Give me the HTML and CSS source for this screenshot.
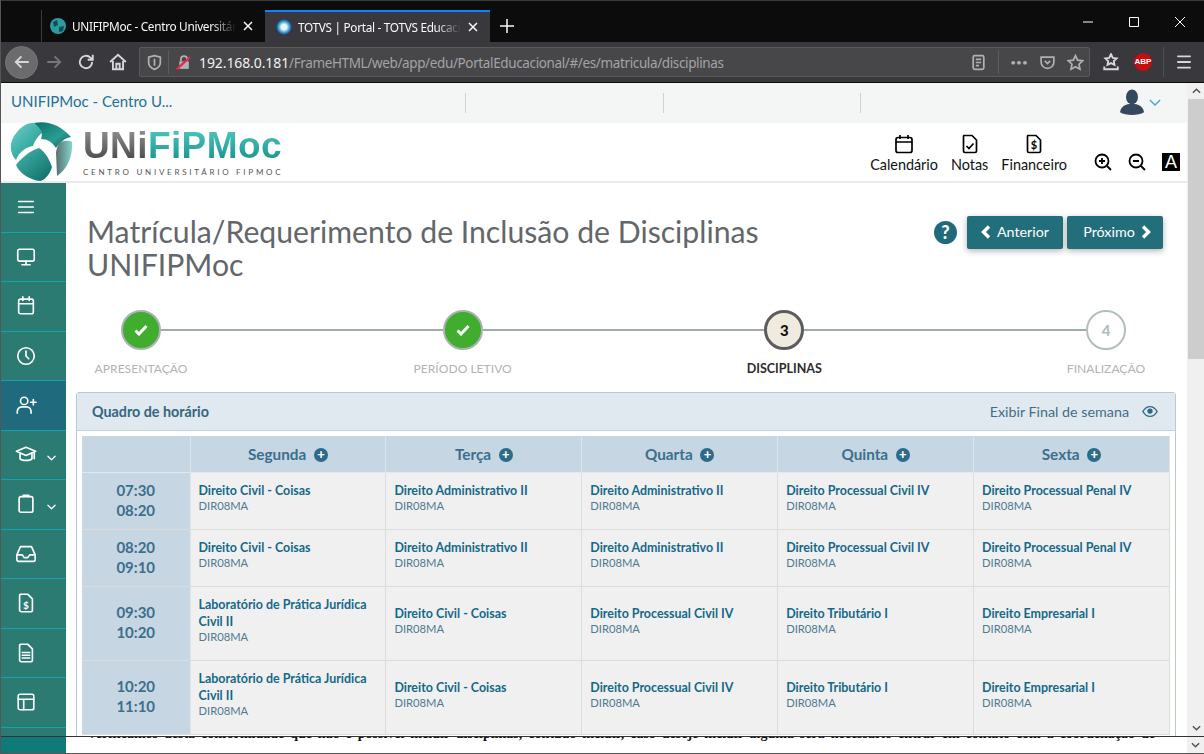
FILE: index.html
```html
<!DOCTYPE html>
<html lang="pt-BR">
<head>
<meta charset="utf-8">
<title>TOTVS | Portal - TOTVS Educacional</title>
<link rel="stylesheet" href="styles.css">
</head>
<body>
<svg class="defs" width="0" height="0">
  <defs>
    <linearGradient id="tealA" x1="0" y1="0" x2="1" y2="1"><stop offset="0" stop-color="#6fd0c8"/><stop offset="1" stop-color="#0f8f86"/></linearGradient>
    <linearGradient id="tealB" x1="0" y1="0" x2="1" y2="1"><stop offset="0" stop-color="#0b6f68"/><stop offset=".6" stop-color="#2a9d94"/><stop offset="1" stop-color="#0f5f5a"/></linearGradient>
    <linearGradient id="tealC" x1="0" y1="0" x2="1" y2="0"><stop offset="0" stop-color="#5b6f6d"/><stop offset="1" stop-color="#7fd6ce"/></linearGradient>
    <linearGradient id="tealD" x1="0" y1="0" x2="1" y2="1"><stop offset="0" stop-color="#45b8ae"/><stop offset="1" stop-color="#0c6a64"/></linearGradient>
    <radialGradient id="totvsFav"><stop offset=".35" stop-color="#e4f4fa"/><stop offset=".6" stop-color="#5fb6dd"/><stop offset="1" stop-color="#0b3f7c"/></radialGradient>
  </defs>
</svg>

<div class="tabbar">
  <div class="tab">
    <svg class="favicon" viewBox="0 0 16 16"><circle cx="8" cy="8" r="8" fill="#2f9aa0"/><path d="M3 4l4-2 1 5-4 2zM9 9l5-1-1 5-4 1z" fill="#0c4f58"/></svg>
    <span class="tab-title">UNIFIPMoc - Centro Universitário FIPMoc</span>
    <svg class="tab-close" viewBox="0 0 12 12"><path d="M2 2l8 8M10 2l-8 8"/></svg>
  </div>
  <div class="tab active">
    <svg class="favicon" viewBox="0 0 16 16"><circle cx="8" cy="8" r="8" fill="url(#totvsFav)"/></svg>
    <span class="tab-title">TOTVS | Portal - TOTVS Educacional</span>
    <svg class="tab-close" viewBox="0 0 12 12"><path d="M2 2l8 8M10 2l-8 8"/></svg>
  </div>
  <svg class="new-tab" viewBox="0 0 14 14"><path d="M7 0v14M0 7h14"/></svg>
  <div class="win-btns">
    <svg viewBox="0 0 12 12"><path d="M1 6h10"/></svg>
    <svg viewBox="0 0 12 12"><path d="M1.500 1.500h9v9h-9z"/></svg>
    <svg viewBox="0 0 12 12"><path d="M1 1l10 10M11 1L1 11"/></svg>
  </div>
</div>

<div class="toolbar">
  <div class="tool-btn back"><svg viewBox="0 0 16 16"><path d="M14 8H2.500M7.500 3l-5 5 5 5"/></svg></div>
  <div class="tool-btn dim"><svg viewBox="0 0 16 16"><path d="M2 8h11.500M8.500 3l5 5-5 5"/></svg></div>
  <div class="tool-btn"><svg viewBox="0 0 16 16"><path d="M13.500 8a5.500 5.500 0 1 1-1.600-3.900L14 6M14 1.500V6H9.500"/></svg></div>
  <div class="tool-btn"><svg viewBox="0 0 16 16"><path d="M1 8l7-6.500L15 8M3.500 7v7.500h9V7M6.500 14.500v-5h3v5"/></svg></div>
  <div class="urlbar">
    <div class="url-icon"><svg viewBox="0 0 16 16"><path d="M8 1.500l5.500 1.500v5c0 3.500-3 5.500-5.500 6.500C5.500 13.500 2.500 11.500 2.500 8V3zM8 4.500v6.500"/></svg></div>
    <div class="url-sep"></div>
    <div class="url-icon lock"><svg viewBox="0 0 16 16"><rect x="4" y="7" width="9" height="7" fill="#b1b1b3" stroke="none"/><path d="M5.500 7V5a3 3 0 0 1 6 0v2" /><path class="slash" d="M1.500 14.500L14 3"/></svg></div>
    <span class="url-text"><b>192.168.0.181</b>/FrameHTML/web/app/edu/PortalEducacional/#/es/matricula/disciplinas</span>
    <div class="url-right">
      <div class="url-icon"><svg viewBox="0 0 16 16"><rect x="3" y="1.500" width="10" height="13" rx="1.500"/><path d="M5.500 5h5M5.500 8h5M5.500 11h3"/></svg></div>
      <div class="url-sep wide"></div>
      <div class="url-icon dots">•••</div>
      <div class="url-icon"><svg viewBox="0 0 16 16"><path d="M2 3h12v4.500a6 6 0 0 1-12 0zM5.500 6.500L8 9l2.500-2.500"/></svg></div>
      <div class="url-icon"><svg viewBox="0 0 16 16"><path d="M8 1.500l2 4.300 4.700.6-3.400 3.200.9 4.700L8 12l-4.200 2.300.9-4.700L1.300 6.400 6 5.800z"/></svg></div>
    </div>
  </div>
  <div class="tool-btn"><svg viewBox="0 0 16 16"><path d="M8 1l1.600 3.300 3.400.5-2.500 2.400.6 3.300L8 9l-3.100 1.500.6-3.300L3 4.800l3.400-.5zM2 12v2.500h12V12"/></svg></div>
  <div class="tool-btn"><span class="abp">ABP</span></div>
  <div class="tool-sep"></div>
  <div class="tool-btn menu"><svg viewBox="0 0 16 16"><path d="M2 3h12M2 8h12M2 13h12"/></svg></div>
</div>

<div class="site">
  <div class="site-main">
    <div class="site-col">
      <div class="topbar">
        <div class="top-title">UNIFIPMoc - Centro U...</div>
        <div class="top-slot"></div>
        <div class="top-slot"></div>
        <div class="top-slot"></div>
        <div class="top-user">
          <svg class="avatar" viewBox="0 0 26 28"><ellipse cx="13" cy="8.500" rx="6.500" ry="8" fill="#34495e"/><path d="M0 25c1-6 6-9 13-9s12 3 13 9c-3 2-8 3-13 3s-10-1-13-3z" fill="#34495e"/></svg>
          <svg class="user-caret" viewBox="0 0 14 8"><path d="M1 1l6 6 6-6"/></svg>
        </div>
      </div>

      <div class="header">
        <div class="logo">
          <svg class="globe" viewBox="0 0 62 60">
            <path d="M17 2c8-3 15 1 19 6-5 3-11 9-13 16-7 1-14 6-17 14C0 32-1 22 4 14 8 8 12 4 17 2z" fill="url(#tealA)"/>
            <path d="M24 1c13-3 27 2 37 14-6 1-11 5-15 11-4-6-9-9-15-9 2-5 1-10-7-16z" fill="url(#tealB)"/>
            <path d="M29 26c5 3 10 10 13 19-2 7-7 13-12 14C20 58 10 52 6 43c6-8 14-14 23-17z" fill="url(#tealD)"/>
            <path d="M50 20c5-1 9-2 12 0 1 13-4 27-15 34l-1-24c1-4 2-8 4-10z" fill="url(#tealC)"/>
          </svg>
          <div class="logo-text">
            <div class="logo-name"><span class="logo-uni">UNi</span><span class="logo-fip">FiPMoc</span></div>
            <div class="logo-sub">CENTRO UNIVERSITÁRIO FIPMOC</div>
          </div>
        </div>
        <div class="shortcuts">
          <div class="shortcut">
            <svg viewBox="0 0 20 20"><rect x="2" y="3.500" width="16" height="15" rx="2"/><path d="M2 8h16M6 1v4M14 1v4"/></svg>
            <span>Calendário</span>
          </div>
          <div class="shortcut">
            <svg viewBox="0 0 20 20"><path d="M4 1.500h8l4.500 4.500v11a1.500 1.500 0 0 1-1.500 1.500H5A1.500 1.500 0 0 1 3.500 17V3A1.500 1.500 0 0 1 4 1.500zM6.500 12l2.500 2.500 4.500-5"/></svg>
            <span>Notas</span>
          </div>
          <div class="shortcut">
            <svg viewBox="0 0 20 20"><path d="M4 1.500h8l4.500 4.500v11a1.500 1.500 0 0 1-1.500 1.500H5A1.500 1.500 0 0 1 3.500 17V3A1.500 1.500 0 0 1 4 1.500z"/><text x="10" y="15" text-anchor="middle" class="dollar">$</text></svg>
            <span>Financeiro</span>
          </div>
        </div>
        <div class="zoom-tools">
          <svg viewBox="0 0 18 18"><circle cx="8" cy="8" r="6.500"/><path d="M13 13l4 4M5 8h6M8 5v6"/></svg>
          <svg viewBox="0 0 18 18"><circle cx="8" cy="8" r="6.500"/><path d="M13 13l4 4M5 8h6"/></svg>
          <span class="contrast">A</span>
        </div>
      </div>

      <div class="body">
        <div class="sidebar">
          <div class="side-item"><svg viewBox="0 0 24 24"><path d="M4 6h16M4 12h16M4 18h16"/></svg></div>
          <div class="side-item"><svg viewBox="0 0 24 24"><rect x="3" y="3.500" width="18" height="13" rx="2"/><path d="M12 16.500v4M7.500 20.500h9"/></svg></div>
          <div class="side-item"><svg viewBox="0 0 24 24"><rect x="4" y="4.500" width="16" height="16" rx="2"/><path d="M4 9.500h16M8.500 2v4M15.500 2v4"/></svg></div>
          <div class="side-item"><svg viewBox="0 0 24 24"><circle cx="12" cy="12" r="9"/><path d="M12 6.500V12l3 3"/></svg></div>
          <div class="side-item current"><svg viewBox="0 0 24 24"><circle cx="10" cy="7.500" r="4"/><path d="M2.500 21v-2a5 5 0 0 1 5-5h5a5 5 0 0 1 5 5v2M20 6v6M17 9h6"/></svg></div>
          <div class="side-item has-sub"><svg viewBox="0 0 24 24"><path d="M1.500 8L12 3.500 22.500 8 12 12.500zM5.500 10v6c2 2.500 11 2.500 13 0v-6M21 9v7"/></svg><svg class="caret" viewBox="0 0 10 6"><path d="M1 1l4 4 4-4"/></svg></div>
          <div class="side-item has-sub"><svg viewBox="0 0 24 24"><rect x="4.500" y="4" width="15" height="17" rx="2"/><path d="M9 4V2.500h6V4"/></svg><svg class="caret" viewBox="0 0 10 6"><path d="M1 1l4 4 4-4"/></svg></div>
          <div class="side-item"><svg viewBox="0 0 24 24"><path d="M6 4h12l4 9v5a2 2 0 0 1-2 2H4a2 2 0 0 1-2-2v-5zM2 13h6l2 3h4l2-3h6"/></svg></div>
          <div class="side-item"><svg viewBox="0 0 24 24"><path d="M6 2.500h8l5 5v12a2 2 0 0 1-2 2H7a2 2 0 0 1-2-2v-15a2 2 0 0 1 1-2z"/><text x="12" y="18" text-anchor="middle" class="side-dollar">$</text></svg></div>
          <div class="side-item"><svg viewBox="0 0 24 24"><path d="M6 2.500h8l5 5v12a2 2 0 0 1-2 2H7a2 2 0 0 1-2-2v-15a2 2 0 0 1 1-2zM8 11.500h8M8 14.500h8M8 17.500h8"/></svg></div>
          <div class="side-item"><svg viewBox="0 0 24 24"><rect x="3.500" y="3.500" width="17" height="17" rx="2"/><path d="M3.500 9h17M9.500 9v11.500"/></svg></div>
        </div>

        <div class="content">
          <div class="title-row">
            <h1>Matrícula/Requerimento de Inclusão de Disciplinas UNIFIPMoc</h1>
            <div class="title-actions">
              <span class="help">?</span>
              <button class="nav-btn"><svg viewBox="0 0 10 14"><path d="M8 1.500L2.500 7 8 12.500"/></svg>Anterior</button>
              <button class="nav-btn">Próximo<svg viewBox="0 0 10 14"><path d="M2 1.500L7.500 7 2 12.500"/></svg></button>
            </div>
          </div>

          <div class="stepper">
            <div class="step-track">
              <span class="step done"><svg viewBox="0 0 14 12"><path d="M1.500 6.500l3.500 3.500 7.500-8"/></svg></span>
              <span class="step-line"></span>
              <span class="step done"><svg viewBox="0 0 14 12"><path d="M1.500 6.500l3.500 3.500 7.500-8"/></svg></span>
              <span class="step-line"></span>
              <span class="step now">3</span>
              <span class="step-line"></span>
              <span class="step todo">4</span>
            </div>
            <div class="step-labels">
              <span>APRESENTAÇÃO</span>
              <span>PERÍODO LETIVO</span>
              <span class="label-now">DISCIPLINAS</span>
              <span>FINALIZAÇÃO</span>
            </div>
          </div>

          <div class="panel">
            <div class="panel-head">
              <span class="panel-title">Quadro de horário</span>
              <span class="panel-link">Exibir Final de semana
                <svg viewBox="0 0 18 14"><path d="M1 7c2-3.500 5-5.500 8-5.500S15 3.500 17 7c-2 3.500-5 5.500-8 5.500S3 10.500 1 7z"/><circle cx="9" cy="6.500" r="3" class="eye-dot"/></svg>
              </span>
            </div>
            <div class="panel-body">
              <table class="grade">
                <tr>
                  <th class="time"></th>
                  <th>Segunda <span class="plus">+</span></th>
                  <th>Terça <span class="plus">+</span></th>
                  <th>Quarta <span class="plus">+</span></th>
                  <th>Quinta <span class="plus">+</span></th>
                  <th>Sexta <span class="plus">+</span></th>
                </tr>
                <tr class="row-a">
                  <td class="time">07:30<br>08:20</td>
                  <td><b>Direito Civil - Coisas</b><small>DIR08MA</small></td>
                  <td><b>Direito Administrativo II</b><small>DIR08MA</small></td>
                  <td><b>Direito Administrativo II</b><small>DIR08MA</small></td>
                  <td><b>Direito Processual Civil IV</b><small>DIR08MA</small></td>
                  <td><b>Direito Processual Penal IV</b><small>DIR08MA</small></td>
                </tr>
                <tr class="row-a">
                  <td class="time">08:20<br>09:10</td>
                  <td><b>Direito Civil - Coisas</b><small>DIR08MA</small></td>
                  <td><b>Direito Administrativo II</b><small>DIR08MA</small></td>
                  <td><b>Direito Administrativo II</b><small>DIR08MA</small></td>
                  <td><b>Direito Processual Civil IV</b><small>DIR08MA</small></td>
                  <td><b>Direito Processual Penal IV</b><small>DIR08MA</small></td>
                </tr>
                <tr class="row-b">
                  <td class="time">09:30<br>10:20</td>
                  <td><b>Laboratório de Prática Jurídica Civil II</b><small>DIR08MA</small></td>
                  <td><b>Direito Civil - Coisas</b><small>DIR08MA</small></td>
                  <td><b>Direito Processual Civil IV</b><small>DIR08MA</small></td>
                  <td><b>Direito Tributário I</b><small>DIR08MA</small></td>
                  <td><b>Direito Empresarial I</b><small>DIR08MA</small></td>
                </tr>
                <tr class="row-b">
                  <td class="time">10:20<br>11:10</td>
                  <td><b>Laboratório de Prática Jurídica Civil II</b><small>DIR08MA</small></td>
                  <td><b>Direito Civil - Coisas</b><small>DIR08MA</small></td>
                  <td><b>Direito Processual Civil IV</b><small>DIR08MA</small></td>
                  <td><b>Direito Tributário I</b><small>DIR08MA</small></td>
                  <td><b>Direito Empresarial I</b><small>DIR08MA</small></td>
                </tr>
              </table>
            </div>
          </div>
        </div>
      </div>
    </div>
    <div class="scrollbar">
      <svg class="arrow" viewBox="0 0 10 6"><path d="M1 5l4-4 4 4"/></svg>
      <div class="thumb"></div>
      <svg class="arrow down" viewBox="0 0 10 6"><path d="M1 1l4 4 4-4"/></svg>
    </div>
  </div>
  <div class="site-bottom">
    <div class="bottom-side"></div>
    <div class="bottom-text"><p>Verificamos desta conformidade que não é possível incluir disciplinas, contudo incluir, caso deseje incluir alguma será necessário entrar em contato com a coordenação de</p></div>
    <div class="bottom-scroll"><svg class="arrow" viewBox="0 0 10 6"><path d="M1 1l4 4 4-4"/></svg></div>
  </div>
</div>
</body>
</html>
```

FILE: styles.css
```css
* {
  padding: 0;
  margin: 0;
  box-sizing: border-box;
}

html, body {
  height: 100%;
  overflow: hidden;
}

body {
  display: flex;
  flex-direction: column;
  font-family: Lato, "Noto Sans", sans-serif;
  background-color: #fff;
  border-left: 1px solid #555;
  border-bottom: 1px solid #555;
}

.defs {
  position: absolute;
}

/* browser chrome */
.tabbar {
  display: flex;
  align-items: flex-end;
  height: 42px;
  flex-shrink: 0;
  background-color: #0c0c0d;
  border-top: 1px solid #3a3a3a;
  padding-left: 40px;
  font-family: "Noto Sans", sans-serif;
}

.tab {
  display: flex;
  align-items: center;
  width: 224px;
  height: 32px;
  padding: 0 11px 0 8px;
  color: #f9f9fa;
  font-size: 11.8px;
  letter-spacing: -0.3px;
  border-left: 1px solid #3a3a3a;
}

.tab.active {
  width: 225px;
  background-color: #38383d;
  border-left: 0;
  border-top: 2px solid #0a84ff;
  padding: 0 11px;
}

.favicon {
  width: 16px;
  height: 16px;
  flex-shrink: 0;
  margin-right: 6px;
}

.tab-title {
  flex-grow: 1;
  overflow: hidden;
  white-space: nowrap;
  -webkit-mask-image: linear-gradient(to right, #000 85%, transparent);
  mask-image: linear-gradient(to right, #000 85%, transparent);
}

.tab-close {
  width: 12px;
  height: 12px;
  flex-shrink: 0;
  margin-left: 6px;
  fill: none;
  stroke: #f9f9fa;
  stroke-width: 1.5;
}

.new-tab {
  width: 14px;
  height: 14px;
  margin: 0 0 9px 10px;
  fill: none;
  stroke: #f9f9fa;
  stroke-width: 1.5;
}

.win-btns {
  display: flex;
  gap: 34px;
  margin-left: auto;
  margin-right: 18px;
  align-self: flex-start;
  margin-top: 15px;
}

.win-btns svg {
  width: 12px;
  height: 12px;
  fill: none;
  stroke: #fff;
  stroke-width: 1;
}

.toolbar {
  display: flex;
  align-items: center;
  height: 41px;
  flex-shrink: 0;
  background-color: #38383d;
  padding-left: 4px;
  border-bottom: 1px solid #0c0c0d;
}

.tool-btn {
  display: flex;
  justify-content: center;
  align-items: center;
  width: 32px;
  height: 33px;
}

.tool-btn svg {
  width: 18px;
  height: 18px;
  fill: none;
  stroke: #d7d7db;
  stroke-width: 1.7;
}

.tool-btn.back {
  width: 33px;
  border-radius: 50%;
  background-color: #6b6b6e;
  border: 1px solid #77777a;
}

.tool-btn.dim svg {
  stroke: #77777b;
}

.urlbar {
  display: flex;
  align-items: center;
  width: 951px;
  height: 30px;
  margin: 0 5px;
  background-color: #474749;
  border: 1px solid #5a5a5d;
  border-radius: 2px;
}

.url-icon {
  display: flex;
  justify-content: center;
  align-items: center;
  width: 28px;
  height: 28px;
  color: #b1b1b3;
  flex-shrink: 0;
}

.url-icon svg {
  width: 17px;
  height: 17px;
  fill: none;
  stroke: #b1b1b3;
  stroke-width: 1.6;
}

.url-icon.lock .slash {
  stroke: #e22850;
  stroke-width: 2;
}

.url-icon.dots {
  font-size: 10px;
}

.url-sep {
  width: 1px;
  height: 24px;
  background-color: #5c5c5f;
  flex-shrink: 0;
}

.url-sep.wide {
  margin: 0 6px;
}

.url-text {
  margin-left: 2px;
  color: #a3a3a6;
  font-size: 13.5px;
  letter-spacing: -0.37px;
  white-space: nowrap;
  font-family: "Noto Sans", sans-serif;
}

.url-text b {
  color: #f0f0f2;
  font-size: 14px;
  letter-spacing: -0.1px;
  font-weight: normal;
}

.url-right {
  display: flex;
  align-items: center;
  margin-left: auto;
}

.abp {
  display: block;
  width: 18px;
  height: 18px;
  line-height: 18px;
  border-radius: 50%;
  background-color: #c70d0d;
  color: #fff;
  font-size: 8px;
  font-weight: bold;
  text-align: center;
  font-family: "Liberation Sans", sans-serif;
}

.tool-sep {
  width: 1px;
  height: 30px;
  margin: 0 4px;
  background-color: #505054;
}

/* page */
.site {
  flex-grow: 1;
  display: flex;
  flex-direction: column;
  min-height: 0;
}

.site-main {
  display: flex;
  height: 653px;
  flex-shrink: 0;
}

.site-col {
  flex-grow: 1;
  display: flex;
  flex-direction: column;
  min-width: 0;
}

.topbar {
  display: flex;
  align-items: center;
  height: 40px;
  flex-shrink: 0;
  background-color: #f4f6f5;
}

.top-title {
  width: 464px;
  padding: 0 0 4px 10px;
  color: #1f7095;
  font-size: 15px;
}

.top-slot {
  width: 197.5px;
  height: 20px;
  border-left: 1px solid #cfd2d1;
}

.top-user {
  display: flex;
  align-items: center;
  margin-left: auto;
  margin-right: 26px;
  padding-bottom: 2px;
}

.avatar {
  width: 24px;
  height: 26px;
}

.user-caret {
  width: 12px;
  height: 7px;
  margin-left: 5px;
  fill: none;
  stroke: #48a9cf;
  stroke-width: 1.6;
}

.header {
  display: flex;
  align-items: center;
  height: 60px;
  flex-shrink: 0;
  background-color: #fff;
  border-bottom: 2px solid #ebebeb;
  padding-right: 7px;
}

.logo {
  display: flex;
  align-items: center;
  margin-right: auto;
  padding-left: 9px;
}

.globe {
  width: 62px;
  height: 60px;
}

.logo-text {
  margin-left: 11px;
  width: 200px;
}

.logo-name {
  font-family: "Liberation Sans", sans-serif;
  font-weight: bold;
  font-size: 37px;
  line-height: 36px;
  letter-spacing: 0.4px;
  white-space: nowrap;
}

.logo-uni {
  background: linear-gradient(#9a9a9a, #3d3d3d);
  -webkit-background-clip: text;
  background-clip: text;
  color: transparent;
}

.logo-fip {
  background: linear-gradient(#56cbc3, #0f8d85);
  -webkit-background-clip: text;
  background-clip: text;
  color: transparent;
}

.logo-sub {
  margin-top: 3px;
  color: #555;
  font-size: 8px;
  line-height: 10px;
  letter-spacing: 2.75px;
  white-space: nowrap;
}

.shortcuts {
  display: flex;
  gap: 13px;
  margin-top: 2px;
}

.shortcut {
  display: flex;
  flex-direction: column;
  align-items: center;
  color: #111;
  font-size: 14.4px;
  line-height: 17px;
}

.shortcut svg {
  width: 20px;
  height: 20px;
  margin-bottom: 2px;
  fill: none;
  stroke: #000;
  stroke-width: 1.7;
}

.shortcut .dollar {
  font-size: 11px;
  font-weight: bold;
  fill: #000;
  stroke: none;
}

.zoom-tools {
  display: flex;
  align-items: center;
  gap: 16px;
  margin-left: 27px;
  align-self: flex-end;
  margin-bottom: 10px;
}

.zoom-tools svg {
  width: 18px;
  height: 18px;
  fill: none;
  stroke: #000;
  stroke-width: 1.8;
}

.contrast {
  display: block;
  width: 18px;
  height: 18px;
  background-color: #000;
  color: #fff;
  font-size: 18px;
  line-height: 18px;
  text-align: center;
  font-family: "Liberation Sans", sans-serif;
}

.body {
  flex-grow: 1;
  display: flex;
  min-height: 0;
  overflow: hidden;
}

.sidebar {
  width: 66px;
  margin-left: -1px;
  flex-shrink: 0;
  background-color: #2b7b73;
}

.side-item {
  display: flex;
  align-items: center;
  justify-content: center;
  height: 49.5px;
  padding-right: 14px;
  border-bottom: 1px solid #12a3b3;
  position: relative;
}

.side-item svg {
  width: 22px;
  height: 22px;
  fill: none;
  stroke: #fff;
  stroke-width: 1.8;
  stroke-linecap: round;
  stroke-linejoin: round;
}

.side-item .side-dollar {
  font-size: 11px;
  font-weight: bold;
  fill: #fff;
  stroke: none;
}

.side-item.current {
  background-color: #1f6a7c;
}

.side-item .caret {
  position: absolute;
  left: 47px;
  top: 24px;
  width: 9px;
  height: 6px;
  stroke-width: 1.4;
}

.content {
  flex-grow: 1;
  min-width: 0;
  background-color: #fff;
}

.title-row {
  display: flex;
  justify-content: space-between;
  padding: 32px 24px 0 21px;
}

h1 {
  width: 700px;
  color: #63666a;
  font-size: 30.2px;
  font-weight: normal;
  line-height: 33px;
}

.title-actions {
  display: flex;
  align-items: flex-start;
  gap: 4px;
  margin-top: 1px;
}

.help {
  display: block;
  width: 23px;
  height: 23px;
  margin: 5px 6px 0 0;
  border-radius: 50%;
  background-color: #1f6b7b;
  color: #fff;
  font-size: 18px;
  font-weight: 900;
  line-height: 23px;
  text-align: center;
}

.nav-btn {
  display: flex;
  align-items: center;
  justify-content: center;
  gap: 6px;
  width: 96px;
  height: 33px;
  padding-bottom: 2px;
  border: none;
  border-radius: 2px;
  background-color: #226e7b;
  color: #fff;
  font-family: inherit;
  font-size: 14.3px;
  box-shadow: 0 2px 6px rgba(0, 0, 0, 0.3);
}

.nav-btn:last-child {
  padding-left: 4px;
}

.nav-btn svg {
  width: 10px;
  height: 14px;
  fill: none;
  stroke: #fff;
  stroke-width: 3.4;
}

.stepper {
  margin: 29px 31px 0 25px;
}

.step-track {
  display: flex;
  align-items: center;
  padding: 0 30px;
}

.step {
  display: flex;
  align-items: center;
  justify-content: center;
  width: 40px;
  height: 40px;
  flex-shrink: 0;
  border-radius: 50%;
  font-size: 15px;
  font-weight: 900;
}

.step svg {
  width: 14px;
  height: 12px;
  fill: none;
  stroke: #fff;
  stroke-width: 3;
}

.step.done {
  background-color: #41ad2e;
  border: 2px solid #a9b3b3;
}

.step.now {
  background-color: #f0ebdf;
  border: 3px solid #5c5c5c;
  color: #111;
}

.step.todo {
  background-color: #fff;
  border: 2px solid #b3bebe;
  color: #b3bebe;
}

.step-line {
  flex-grow: 1;
  height: 2px;
  background-color: #a0acac;
}

.step-labels {
  display: flex;
  justify-content: space-between;
  margin-top: 12px;
}

.step-labels span {
  width: 100px;
  color: #b0b4b4;
  font-size: 12.1px;
  line-height: 14px;
  text-align: center;
  white-space: nowrap;
}

.step-labels .label-now {
  color: #2c2c2c;
  font-size: 12.5px;
  font-weight: bold;
}

.panel {
  margin: 16px 11px 0 10px;
  border: 1px solid #b9c7d6;
  border-radius: 3px 3px 0 0;
  background-color: #fff;
}

.panel-head {
  display: flex;
  align-items: center;
  justify-content: space-between;
  height: 38px;
  padding: 0 17px 0 15px;
  background-color: #dfe9ef;
  border-bottom: 1px solid #c3d0de;
}

.panel-title {
  color: #33667f;
  font-size: 14.3px;
  font-weight: bold;
}

.panel-link {
  display: flex;
  align-items: center;
  gap: 13px;
  color: #3f6f87;
  font-size: 14.3px;
}

.panel-link svg {
  width: 16px;
  height: 13px;
  fill: none;
  stroke: #2d6b86;
  stroke-width: 1.6;
}

.panel-link .eye-dot {
  fill: #2d6b86;
  stroke: none;
}

.panel-body {
  padding: 5px;
}

.grade {
  width: 1088px;
  table-layout: fixed;
  border-collapse: collapse;
}

.grade th, .grade td {
  border: 1px solid #dcdcdc;
  border-top: 0;
  border-left: 0;
  background-color: #f0f0f0;
}

.grade tr > *:first-child {
  width: 108px;
}

.grade th {
  height: 36px;
  background-color: #c6d6e3;
  color: #3a6f8e;
  font-size: 15.3px;
  font-weight: bold;
  border-right-color: #dde5ec;
  border-bottom-color: #e2e8ee;
}

.plus {
  display: inline-block;
  width: 14px;
  height: 14px;
  margin-left: 4px;
  border-radius: 50%;
  background-color: #2d6b8c;
  color: #fff;
  font-size: 13px;
  font-weight: 900;
  line-height: 13px;
  text-align: center;
  vertical-align: 1px;
}

.grade td {
  padding: 0 8px 6px;
  color: #14688a;
  font-size: 12.45px;
  line-height: 17px;
  vertical-align: middle;
}

.grade td b {
  display: block;
  font-weight: bold;
}

.grade td small {
  display: block;
  color: #4d7a90;
  font-size: 11.2px;
  line-height: 14px;
}

.grade td.time {
  padding: 0 0 2px;
  background-color: #c6d6e3;
  color: #3b6f8c;
  font-size: 15px;
  font-weight: bold;
  line-height: 20px;
  text-align: center;
  border-right-color: #dde5ec;
}

.row-a td {
  height: 57px;
}

.row-b td {
  height: 74px;
}

.scrollbar {
  display: flex;
  flex-direction: column;
  align-items: center;
  width: 17px;
  flex-shrink: 0;
  background-color: #f0f0f0;
  border-left: 1px solid #f0f0f0;
}

.arrow {
  width: 9px;
  height: 6px;
  margin: 5px 0;
  flex-shrink: 0;
  fill: none;
  stroke: #505050;
  stroke-width: 1.6;
}

.thumb {
  width: 17px;
  height: 260px;
  background-color: #cdcdcd;
}

.arrow.down {
  margin-top: auto;
}

.site-bottom {
  display: flex;
  flex-grow: 1;
  min-height: 0;
  border-top: 1px solid #333;
  background-color: #fff;
}

.bottom-side {
  width: 65px;
  flex-shrink: 0;
  background-color: #0f7a78;
}

.bottom-text {
  flex-grow: 1;
  overflow: hidden;
  padding-left: 21px;
}

.bottom-text p {
  width: 1068px;
  margin-top: -11px;
  color: #111;
  font-family: "Liberation Serif", serif;
  font-size: 14px;
  font-weight: bold;
  line-height: 15px;
  white-space: nowrap;
  text-align-last: justify;
}

.bottom-scroll {
  display: flex;
  justify-content: center;
  align-items: center;
  width: 17px;
  flex-shrink: 0;
  background-color: #f0f0f0;
}
```
